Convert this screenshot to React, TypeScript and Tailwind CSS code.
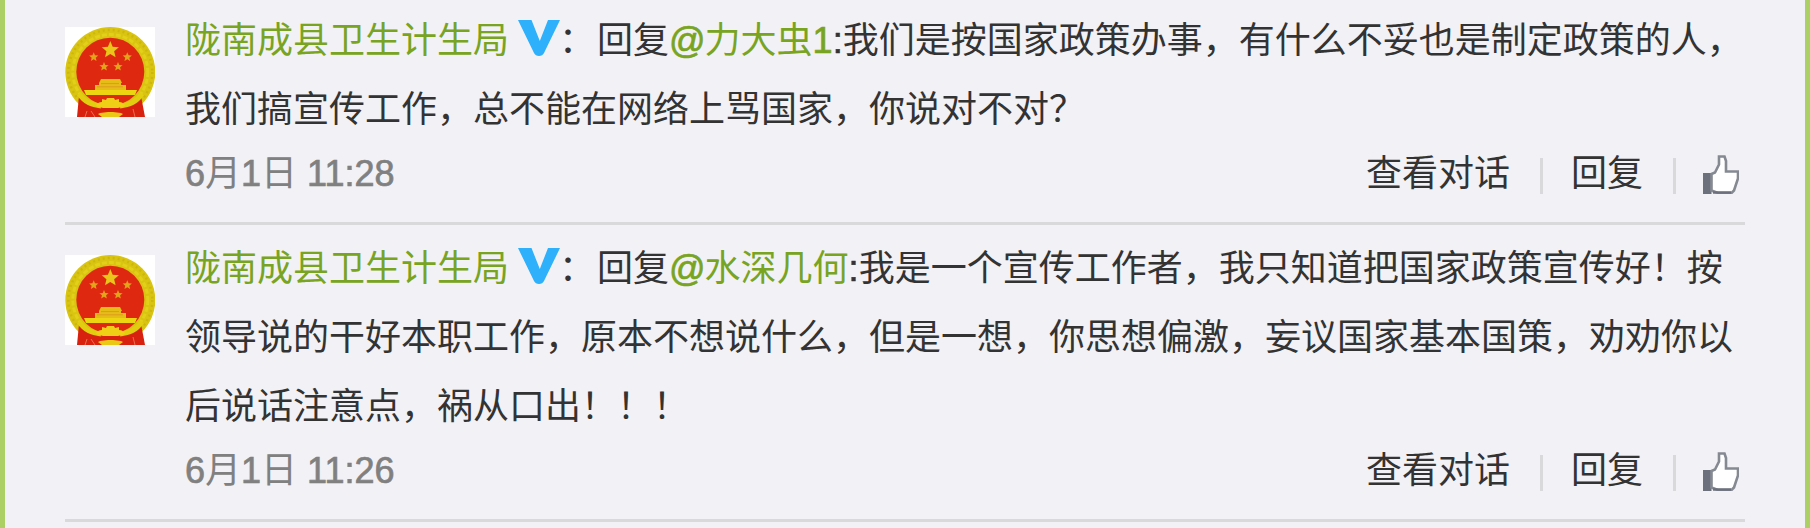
import type { ReactNode } from 'react';

function star(cx: number, cy: number, r: number): string {
  return Array.from({ length: 10 }, (_, i) => {
    const radius = i % 2 === 0 ? r : r * 0.45;
    const angle = (Math.PI / 5) * i - Math.PI / 2;
    return `${(cx + radius * Math.cos(angle)).toFixed(2)},${(cy + radius * Math.sin(angle)).toFixed(2)}`;
  }).join(' ');
}

function Emblem() {
  return (
    <svg viewBox="0 0 90 90" className="mt-[30px] size-[90px] shrink-0 bg-white" aria-hidden="true">
      <circle cx="45.3" cy="45" r="45" fill="#d9c411" />
      <circle cx="45.3" cy="45" r="42" fill="none" stroke="#cdb70f" strokeWidth="2.5" strokeDasharray="2 3" />
      <circle cx="45.3" cy="45" r="37.5" fill="none" stroke="#e3d01a" strokeWidth="3" strokeDasharray="5 2" />
      <circle cx="45.3" cy="44.7" r="34" fill="#de2910" />
      <polygon points={star(45.3, 23, 9)} fill="#eac51a" />
      <polygon points={star(28.7, 30, 4.8)} fill="#e3a31a" />
      <polygon points={star(62.3, 30, 4.8)} fill="#e3a31a" />
      <polygon points={star(39, 39.7, 4.8)} fill="#e3a31a" />
      <polygon points={star(53, 39.7, 4.8)} fill="#e3a31a" />
      <path d="M36 52h19l2 4H34zM34 56h22v2h5v5H30v-5h4z" fill="#e6bd18" />
      <path d="M36 56.600h18M32 59.800h26" stroke="#d8941a" strokeWidth="0.8" />
      <path d="M19 63h53l-2 5H21z" fill="#eed512" />
      <path d="M14 69c6 5 13 9 21 9l10 2 11-2c8 0 15-4 20-9l4 21H12z" fill="#d8210f" />
      <path d="M14 67c6 8 12 11 22 12M77 67c-6 8-12 11-22 12" fill="none" stroke="#e3cd10" strokeWidth="5" />
      <path d="M31 79c1-3 3-4 6-4l0-3 4 1 1-2h7l1 2 4-1 0 3c3 0 5 1 6 4l-7 2H38z" fill="#f0d016" />
      <path d="M35 86l8-1h5l8 1 2 1-4 3H37l-4-3z" fill="#ecc816" />
      <path d="M22 84l-2 6M26 84l4 6M68 82l2 8" stroke="#ec6d50" strokeWidth="1" />
    </svg>
  );
}

function VerifiedMark() {
  return (
    <svg viewBox="0 0 42 36" className="ml-[9px] inline-block h-9 w-[42px] align-[-3px]" aria-hidden="true">
      <path d="M0 0h13.5l8.3 21L30 0h12L26 33q-1.500 3-5 3t-5-3z" fill="#2fb0fb" />
    </svg>
  );
}

function ThumbUp() {
  return (
    <svg viewBox="0 0 36 39" className="h-[39px] w-9" aria-hidden="true">
      <path d="M0 18h8.500v21H0z" fill="#6b707c" />
      <path
        d="M8.500 19l3.500-1.500L16 9.500V1.500h5.500l1.500 4.500v10.500h12v7l-4 12-2.500 2.500H15l-6.500-2.500z"
        fill="#fff"
        stroke="#858992"
        strokeWidth="2.600"
      />
      <path d="M10 37.500h18" stroke="#6b707c" strokeWidth="2.500" />
    </svg>
  );
}

function Name({ children }: { children: ReactNode }) {
  return <span className="text-[#78a422]">{children}</span>;
}

function Latin({ children }: { children: ReactNode }) {
  return <span className="[-webkit-text-stroke:0.7px_currentColor]">{children}</span>;
}

function Divider() {
  return <span className="h-9 w-[3px] bg-[#d9d9dc]" />;
}

function Comment({ clock, children }: { clock: string; children: ReactNode }) {
  return (
    <article className="flex border-b-[3px] border-[#d9d9db]">
      <Emblem />
      <div className="ml-[30px] flex-1 pt-[9px]">
        <p className="whitespace-nowrap leading-[69px]">
          <Name>陇南成县卫生计生局</Name>
          <VerifiedMark />
          <span className="-ml-px mr-0.5">：</span>回复{children}
        </p>
        <footer className="flex h-[78px] items-start justify-between">
          <time className="pt-[3px] leading-[54px] text-[#808080]">
            <Latin>6</Latin>月<Latin>1</Latin>日 <Latin>{clock}</Latin>
          </time>
          <div className="flex pr-1.5">
            <span className="pt-[3px] leading-[54px]">查看对话</span>
            <span className="flex pt-3.5 pr-7 pl-[30px]">
              <Divider />
            </span>
            <span className="pt-[3px] leading-[54px]">回复</span>
            <span className="flex gap-[27px] pt-[11px] pl-[30px]">
              <span className="flex pt-[3px]">
                <Divider />
              </span>
              <ThumbUp />
            </span>
          </div>
        </footer>
      </div>
    </article>
  );
}

export default function App() {
  return (
    <main
      lang="zh-CN"
      className="h-[528px] overflow-hidden border-x-[5px] border-[#acd064] bg-[#f1f1f6] px-[60px] font-['Liberation_Sans','Noto_Sans_CJK_SC',sans-serif] text-[36px] text-[#333]"
    >
      <div className="-mt-[3px]">
        <Comment clock="11:28">
          <Name>
            <Latin>@</Latin>
            <span className="-ml-px">力大虫</span>
            <Latin>1</Latin>
          </Name>
          <Latin>:</Latin>我们是按国家政策办事，有什么不妥也是制定政策的人，
          <br />
          我们搞宣传工作，总不能在网络上骂国家，你说对不对？
        </Comment>
        <Comment clock="11:26">
          <Name>
            <Latin>@</Latin>
            <span className="-ml-px">水深几何</span>
          </Name>
          <Latin>:</Latin>我是一个宣传工作者，我只知道把国家政策宣传好！按
          <br />
          领导说的干好本职工作，原本不想说什么，但是一想，你思想偏激，妄议国家基本国策，劝劝你以
          <br />
          后说话注意点，祸从口出！！！
        </Comment>
      </div>
    </main>
  );
}
